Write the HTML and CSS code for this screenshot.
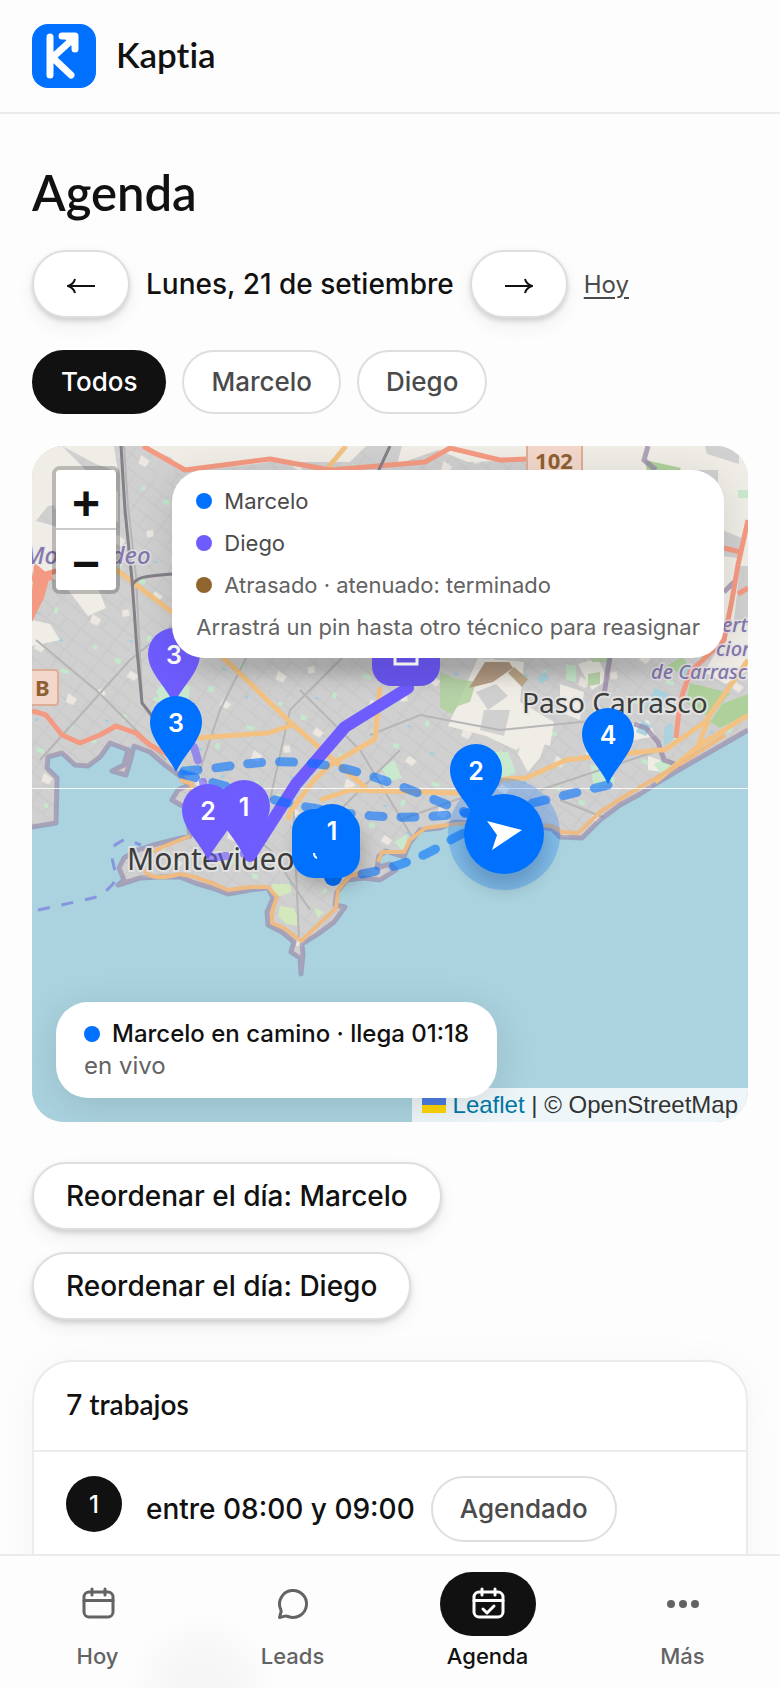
FILE: index.html
```html
<!DOCTYPE html>
<html lang="es">
<head>
<meta charset="utf-8">
<meta name="viewport" content="width=device-width, initial-scale=1">
<title>Agenda · Kaptia</title>
<link rel="stylesheet" href="styles.css">
</head>
<body>
<header class="topbar">
  <svg class="logo" viewBox="0 0 64 64" aria-hidden="true">
    <rect width="64" height="64" rx="16" fill="#0070ff"/>
    <g fill="none" stroke="#fff" stroke-width="7" stroke-linecap="round" stroke-linejoin="round">
      <path d="M18 13v38M20 34l22-20M20 33l19 18"/>
      <path d="M30 12h13v13" fill="#fff"/>
    </g>
  </svg>
  <span class="brand">Kaptia</span>
</header>

<main class="content">
  <h1 class="title">Agenda</h1>

  <div class="datebar">
    <button class="btn btn-arrow" type="button" aria-label="Día anterior">
      <svg class="arrow" viewBox="0 0 28 16" aria-hidden="true"><path d="M28 8H2M8 1C7 5 4 7 1 8c3 1 6 3 7 7"/></svg>
    </button>
    <span class="date">Lunes, 21 de setiembre</span>
    <button class="btn btn-arrow" type="button" aria-label="Día siguiente">
      <svg class="arrow" viewBox="0 0 28 16" aria-hidden="true"><path d="M0 8h26M20 1c1 4 4 6 7 7-3 1-6 3-7 7"/></svg>
    </button>
    <a class="today" href="#hoy">Hoy</a>
  </div>

  <div class="chips">
    <button class="chip chip-on" type="button">Todos</button>
    <button class="chip" type="button">Marcelo</button>
    <button class="chip" type="button">Diego</button>
  </div>

  <section class="map" aria-label="Mapa de trabajos">
    <svg class="map-canvas" viewBox="32 446 716 676" preserveAspectRatio="xMidYMid slice">
      <defs>
        <pattern id="streets" width="34" height="26" patternUnits="userSpaceOnUse" patternTransform="rotate(38)">
          <path d="M0 4H34M0 17H34M9 0V26M25 4V17" stroke="#c7c7c7" stroke-width="1" fill="none"/>
        </pattern>
        <pattern id="parks" width="97" height="83" patternUnits="userSpaceOnUse" patternTransform="rotate(17)">
          <path d="M12 14h6v5h-6zM60 40h8v4h-8zM36 66h4v6h-4zM84 8h4v4h-4z" fill="#c3e8cb"/>
          <path d="M30 22l9 3-3 6-8-2zM74 62l10 3-2 7-8-1zM4 50l6-3 3 6-6 3z" fill="#ece8e1"/>
          <path d="M50 12h3v3h-3zM20 76h4v2h-4z" fill="#9fcfe0"/>
        </pattern>
        <filter id="soft" x="-20%" y="-20%" width="140%" height="160%"><feGaussianBlur stdDeviation="9"/></filter>
        <path id="pin" d="M0 0C-9-19-26-32-26-50a26 26 0 0 1 52 0C26-32 9-19 0 0z"/>
      </defs>

      <rect x="32" y="446" width="716" height="676" fill="#d0d0d0"/>
      <rect x="32" y="446" width="716" height="500" fill="url(#streets)"/>
      <rect x="32" y="446" width="716" height="500" fill="url(#parks)"/>

      <!-- open land -->
      <g fill="#f0ede6">
        <path d="M146 446h220l-16 16-80 0-84 10z"/>
        <path d="M390 446h138v14l-60 2-30-12-40 14zM582 446h166v210l-30-10V470H582z"/>
        <path d="M32 446h30l30 30 26 16v30l-40-20-30 4-16 20zM62 446h52l4 26-22-8z"/>
        <path d="M32 520l30 8 20 20 24 60-18 8-26-34-30-10zM32 620l18 4 10 16-28 6z"/>
        <path d="M478 658l46 4-4 40 34 20-4 24-20-6-14 10-30-14-38-10z"/>
        <path d="M728 620h20v50l-22 14-22-12 18-30zM578 664l20-6 10 22-16 10zM560 684l24 8-4 28-20-8z"/>
        <path d="M524 734l24 0-8 24-12 14-10-18zM648 756l12 4 2 12-14-2zM608 730l40-10 8 16-32 6z"/>
      </g>
      <g fill="#d0d0d0">
        <path d="M705 446h34v18l-32-10zM722 530l20 8-4 20-16-2zM740 566h8v60l-14-6zM372 446h30l-6 22h-24zM152 450l20 8 4 18-18 4z"/>
        <path d="M484 710l26 0-6 26-24-6zM476 692l20-8 12 12-20 14z"/>
      </g>
      <g fill="#aed19b">
        <path d="M645 460l36 8-4 8-30-4zM690 683l40 10-20 24-24-14zM722 704l26-10v20l-28 14-10-6zM668 665l14-8 12 14-8 8z"/>
        <path d="M440 672l14 6 22 4-6 20-12 4-6 8-12-6zM588 674l12-2v12l-12 2zM588 652h24v10h-20z" opacity=".8"/>
      </g>
      <g fill="#c8e9ce">
        <path d="M500 750l10 6-2 24-12-6zM490 752l18 0 8 20-14 8-12-12zM156 690l14-12 20 8-2 20-26 2zM566 664l10 2v16l-10-2zM382 768l12-8 8 18-14 4zM654 764l12-6 8 10-12 8zM590 764l14 4 4 16-14 4z"/>
        <path d="M738 490h10v8h-10zM394 842l14-8-4 18z"/>
      </g>
      <path d="M485 662h24l4 6-20 14-24 6z" fill="#b79e86"/>
      <path d="M514 667l14 12-6 8-14-14z" fill="#bfa98a"/>
      <g fill="#aad3df">
        <path d="M655 688l14 6-10 18-14-4zM664 728l8-6 2 16-10 8zM642 720l10 6-6 10-10-4zM537 678l8-6 4 6-8 6zM680 672l10-6 2 8-10 4z"/>
      </g>
      <path d="M272 884l18 0 2 8-18 6zM280 906l14 2 6 18-14-2-8-8zM314 908l10 4-6 6z" fill="#d3e8bd"/>
      <path d="M124 446l4 60 8 70 6 120M36 640l60 50 70 70M40 760l90-100 62-50M200 770l20-60 30-60M270 800l20-90 60-60M300 690l60 60 60 100M370 735l50-20 80 15 100-10M330 870l10-60 60-60M210 800l60 50 40 60M293 800l6 140M540 790l120-40M560 800l50 20 40-30M400 820l100-36" fill="none" stroke="#b6b6b6" stroke-width="2"/>

      <!-- water -->
      <path d="M32 827L56 823L57 778L47 768L48 757L62 753L75 765L88 766L100 757L110 743L128 750L124 765L112 771L126 775L130 762L134 746L150 752L165 765L180 776L188 785L178 790L172 800L186 808L190 836L165 842L150 846L138 850L124 858L119 868L124 880L118 885L140 878L160 877L180 877L195 883L212 888L228 894L250 890L268 888L273 898L267 912L268 925L282 932L294 942L291 952L300 958L301 974L303 955L302 944L318 934L334 922L345 907L335 905L337 892L347 880L364 878L380 880L396 870L390 864L377 868L379 856L386 851L404 857L409 844L420 830L440 828L455 822L480 824L500 823L530 825L552 829L560 837L582 838L600 820L620 805L640 794L662 780L682 768L710 752L748 730V1122H32z" fill="#aad3df"/>
      <path d="M32 827L56 823L57 778L47 768L48 757L62 753L75 765L88 766L100 757L110 743L128 750L124 765L112 771L126 775L130 762L134 746L150 752L165 765L180 776L188 785L178 790L172 800L186 808L190 836L165 842L150 846L138 850L124 858L119 868L124 880L118 885L140 878L160 877L180 877L195 883L212 888L228 894L250 890L268 888L273 898L267 912L268 925L282 932L294 942L291 952L300 958L301 974L303 955L302 944L318 934L334 922L345 907L335 905L337 892L347 880L364 878L380 880L396 870L390 864L377 868L379 856L386 851L404 857L409 844L420 830L440 828L455 822L480 824L500 823L530 825L552 829L560 837L582 838L600 820L620 805L640 794L662 780L682 768L710 752L748 730" fill="none" stroke="#9583a6" stroke-opacity=".6" stroke-width="5" stroke-linejoin="round"/>
      <path d="M648 446l-4 14 12 10M611 652l-4 22-3 22M634 724l12 4 12 14 6 18 16 6M724 592l10-10" fill="none" stroke="#9583a6" stroke-opacity=".7" stroke-width="5"/>
      <path d="M38 910l37-8 26-6 12-12 3-8-4-18 3-13 10-6 16 6" fill="none" stroke="#7a80dd" stroke-opacity=".75" stroke-width="3" stroke-dasharray="12 12"/>

      <!-- roads -->
      <g fill="none" stroke-linejoin="round">
        <path d="M114 568L172 612L230 664L290 722L345 770L366 788M196 738L268 733L295 724M346 446L326 470M380 687L375 739L330 765L314 780L290 812L288 820M320 800L350 790L460 793L505 779L526 778L566 760L600 756L660 750L665 750L705 722L748 660M698 746L708 720M655 782L700 745L748 715" stroke="#f3c282" stroke-width="5"/>
        <path d="M144 870C150 880 165 878 180 874L195 877L212 883L228 890L250 887L268 887L277 897L272 912L272 923L284 928L301 941L336 908L338 890L350 876L362 872M378 862L382 852L404 852L410 840L425 828L455 824L500 822L552 826L562 832L578 833L600 812L625 796L680 764L725 735M190 836L165 846L152 852M180 780L192 784L190 800" stroke="#eebb83" stroke-width="4"/>
        <path d="M143 446l42 24 85-11 60 11 95-8 25-14 50 12 28-1M32 612l14-38 14-4M32 578l20 0M32 711l14 4 16 20 18 8 20-8 16-9 20 7 14 12 22 12M748 520l-10 45-6 35-8 40-34 32-10 30-4 36M724 548l16 4M738 594l10-6" stroke="#f59a82" stroke-width="5"/>
        <path d="M34 562l16 14-6 22-12 24v-30z" fill="#f59a82"/>
        <path d="M121 446l4 64 7 70 5 70 5 53 14 18M132 586c4-10 16-10 40-12M390 446l-14 30" stroke="#858088" stroke-width="3"/>
      </g>

      <!-- place labels -->
      <g class="place">
        <text x="127" y="870" font-size="30">Montevideo</text>
        <text x="522" y="713" font-size="28">Paso Carrasco</text>
      </g>
      <g class="area">
        <text x="24" y="564" font-size="24">Montevideo</text>
        <g font-size="20"><text x="722" y="632">erto</text><text x="716" y="656">cional</text><text x="651" y="679">de Carrasco</text></g>
      </g>
      <g class="shield">
        <rect x="527" y="436" width="55" height="38" rx="3"/><text x="554" y="469">102</text>
        <rect x="20" y="670" width="38" height="35" rx="3"/><text x="36" y="696">1B</text>
      </g>
      <path d="M32 788.500H748" stroke="#fff" stroke-opacity=".85" stroke-width="1"/>

      <!-- routes -->
      <g fill="none" stroke-linecap="round" stroke-linejoin="round">
        <path d="M408 688L345 727L296 784L250 856" stroke="#6e5cff" stroke-width="12"/>
        <path d="M194 747l6 20M203 782l4 20M212 858l36-5" stroke="#6e5cff" stroke-opacity=".6" stroke-width="8" stroke-dasharray="14 18"/>
        <g stroke="#0070ff" stroke-opacity=".58" stroke-width="9" stroke-dasharray="14 18">
          <path d="M184 771c44-3 72-11 108-9 50 2 80 14 116 27l64 26"/>
          <path d="M182 774c40 10 80 25 130 34 60 10 100 13 170 3"/>
          <path d="M362 874c40-8 60-16 92-36l30-15M608 785l-100 24"/>
        </g>
      </g>

      <!-- markers -->
      <g filter="url(#soft)" opacity=".2"><rect x="296" y="826" width="68" height="60" rx="20"/><circle cx="504" cy="846" r="42"/><ellipse cx="430" cy="664" rx="240" ry="10"/></g>
      <g class="pin-text">
        <g fill="#6e5cff">
          <rect x="372" y="618" width="68" height="68" rx="20" fill="#6654ea"/>
          <use href="#pin" x="174" y="704"/><use href="#pin" x="208" y="860"/><use href="#pin" x="244" y="856"/>
        </g>
        <path d="M395 640h22v24h-22z" fill="none" stroke="#fff" stroke-width="3"/>
        <g fill="#0070ff">
          <circle cx="333" cy="877" r="9" fill="#0061dc"/>
          <use href="#pin" x="176" y="772"/><use href="#pin" x="608" y="784"/>
          <use href="#pin" x="476" y="820"/>
          <rect x="292" y="809" width="68" height="69" rx="22"/>
          <circle cx="332" cy="830" r="26"/>
          <circle cx="504" cy="834" r="56" fill-opacity=".25"/><circle cx="504" cy="834" r="40"/>
        </g>
        <path d="M487 821l35 9-30 20 5-15z" fill="#fff"/>
        <path d="M314 853q0 4 3 5" stroke="#fff" stroke-width="2" fill="none"/>
        <text x="174" y="664">3</text><text x="176" y="732">3</text><text x="208" y="820">2</text><text x="244" y="816">1</text>
        <text x="332" y="840">1</text><text x="476" y="780">2</text><text x="608" y="744">4</text>
      </g>
    </svg>

    <div class="zoom">
      <button type="button" aria-label="Acercar">+</button>
      <button type="button" aria-label="Alejar">−</button>
    </div>

    <div class="credit">
      <svg class="flag" viewBox="0 0 24 16" aria-hidden="true"><path d="M0 0h24v8H0z" fill="#4c7be1"/><path d="M0 8h24v8H0z" fill="#ffd500"/></svg>
      <span><a href="#leaflet">Leaflet</a> | © OpenStreetMap</span>
    </div>

    <ul class="legend">
      <li><i class="dot dot-blue"></i>Marcelo</li>
      <li><i class="dot dot-violet"></i>Diego</li>
      <li class="muted"><i class="dot dot-brown"></i>Atrasado · atenuado: terminado</li>
      <li class="muted">Arrastrá un pin hasta otro técnico para reasignar</li>
    </ul>

    <div class="live">
      <div class="live-main"><i class="dot dot-blue"></i>Marcelo en camino · llega 01:18</div>
      <div class="live-sub">en vivo</div>
    </div>
  </section>

  <div class="actions">
    <button class="btn" type="button">Reordenar el día: Marcelo</button>
    <button class="btn" type="button">Reordenar el día: Diego</button>
  </div>

  <section class="card">
    <h2 class="card-title">7 trabajos</h2>
    <div class="job">
      <span class="job-num">1</span>
      <span class="job-time">entre 08:00 y 09:00</span>
      <span class="badge">Agendado</span>
    </div>
  </section>
</main>

<nav class="tabs">
  <a class="tab" href="#hoy">
    <span class="tab-icon"><svg viewBox="0 0 40 40" aria-hidden="true"><rect x="6" y="8" width="29" height="25" rx="5"/><path d="M6 16.500h29M14 5v6M27 5v6"/></svg></span>Hoy
  </a>
  <a class="tab" href="#leads">
    <span class="tab-icon"><svg viewBox="0 0 40 40" aria-hidden="true"><path d="M6.500 33.500l1.500-5.500c.4-1.300 0-2-.5-3A13.500 13.500 0 1 1 15 32.500c-1-.4-2-.7-3-.4z"/></svg></span>Leads
  </a>
  <a class="tab tab-on" href="#agenda" aria-current="page">
    <span class="tab-icon"><svg viewBox="0 0 40 40" aria-hidden="true"><rect x="6" y="8" width="29" height="25" rx="5"/><path d="M6 16.500h29M14 5v6M27 5v6M15 25l4 4 7-7"/></svg></span>Agenda
  </a>
  <a class="tab" href="#mas">
    <span class="tab-icon"><svg class="dots" viewBox="0 0 40 40" aria-hidden="true"><circle cx="8" cy="20" r="4"/><circle cx="20" cy="20" r="4"/><circle cx="32" cy="20" r="4"/></svg></span>Más
  </a>
</nav>
</body>
</html>
```
FILE: styles.css
```css
* { box-sizing: border-box; }

body {
  margin: 0;
  height: 100vh;
  display: flex;
  flex-direction: column;
  background: #fdfdfd;
  color: #111;
  font-family: Inter, "Liberation Sans", sans-serif;
  font-size: 28px;
  font-weight: 500;
}

button { font: inherit; color: inherit; cursor: pointer; }

.topbar {
  flex: none;
  display: flex;
  align-items: center;
  gap: 20px;
  padding: 24px 32px;
  border-bottom: 2px solid #ebebeb;
}
.logo { width: 64px; height: 64px; }
.brand, .title, .card-title {
  font-family: Lato, Inter, sans-serif;
  font-weight: 600;
  font-variant-ligatures: none;
}
.brand { padding-bottom: 4px; font-size: 35px; line-height: 40px; }

.content {
  flex: 1;
  min-height: 0;
  overflow-y: auto;
  scrollbar-width: none;
  padding: 50px 32px 0;
}

.title { margin: 0 0 30px; font-size: 49px; line-height: 56px; }

.datebar { display: flex; align-items: center; gap: 16px; }
.btn {
  height: 68px;
  padding: 0 32px;
  border: 2px solid #dedede;
  border-radius: 34px;
  background: #fff;
  box-shadow: 0 3px 5px rgba(0, 0, 0, .14), 0 8px 20px rgba(0, 0, 0, .06);
}
.btn-arrow { width: 98px; display: flex; align-items: center; justify-content: center; }
.arrow { width: 28px; height: 16px; margin-top: 4px; fill: none; stroke: #111; stroke-width: 2; }
.today { color: #4a4a4a; font-size: 24px; font-weight: 400; text-underline-offset: 4px; }

.chips { display: flex; gap: 16px; margin-top: 32px; }
.chip, .badge {
  border: 2px solid #dedede;
  border-radius: 34px;
  background: #fff;
  color: #4a4a4a;
  font-size: 26px;
}
.chip { height: 64px; padding: 0 27px 2px; }
.chip-on { background: #111; border-color: #111; color: #fff; }

.map {
  position: relative;
  margin-top: 32px;
  aspect-ratio: 716 / 676;
  border-radius: 32px;
  overflow: hidden;
}
.map-canvas { display: block; width: 100%; height: 100%; }
.place { font-family: "Noto Sans", sans-serif; font-weight: 400; fill: #3c3c3c; stroke: #e6e6e6; stroke-opacity: .8; stroke-width: 4px; paint-order: stroke; }
.area { font-family: "Noto Sans", sans-serif; font-style: italic; font-weight: 500; fill: #8478ab; stroke: #e8e6ea; stroke-opacity: .8; stroke-width: 3px; paint-order: stroke; }
.shield { font: 700 22px "Noto Sans", sans-serif; text-anchor: middle; }
.shield rect { fill: #f3d7cb; stroke: #dcae96; stroke-width: 2px; }
.shield text { fill: #8f6132; }
.pin-text text { font-size: 25px; font-weight: 600; text-anchor: middle; fill: #fff; }

.zoom {
  position: absolute;
  left: 20px;
  top: 20px;
  width: 68px;
  border: 4px solid rgba(0, 0, 0, .22);
  border-radius: 8px;
  background-clip: padding-box;
}
.zoom button {
  display: block;
  width: 100%;
  height: 60px;
  padding: 8px 0 0;
  border: 0;
  background: #fff;
  font: 700 48px/52px "Liberation Sans", sans-serif;
}
.zoom button:first-child { border-bottom: 2px solid #ccc; border-radius: 4px 4px 0 0; }
.zoom button:last-child { border-radius: 0 0 4px 4px; }

.credit {
  position: absolute;
  right: 0;
  bottom: 0;
  display: flex;
  align-items: center;
  gap: 7px;
  padding: 0 10px;
  background: rgba(255, 255, 255, .8);
  color: #333;
  font: 400 24px/34px "Liberation Sans", sans-serif;
}
.credit a { color: #0078a8; text-decoration: none; }
.flag { width: 24px; height: 16px; }

.legend {
  position: absolute;
  right: 24px;
  top: 24px;
  display: grid;
  gap: 12px;
  margin: 0;
  padding: 16px 24px;
  border-radius: 32px;
  background: #fff;
  box-shadow: 0 8px 40px rgba(0, 0, 0, .12);
  list-style: none;
  color: #4a4a4a;
  font-size: 22px;
  font-weight: 400;
  line-height: 30px;
}
.legend li, .live-main { display: flex; align-items: center; gap: 12px; }
.legend .muted { color: #636363; }
.dot { flex: none; width: 16px; height: 16px; border-radius: 50%; }
.dot-blue { background: #0070ff; }
.dot-violet { background: #6e5cff; }
.dot-brown { background: #91652f; }

.live {
  position: absolute;
  left: 24px;
  bottom: 24px;
  padding: 16px 28px;
  border-radius: 32px;
  background: #fff;
  box-shadow: 0 8px 40px rgba(0, 0, 0, .12);
  font-size: 24px;
  line-height: 32px;
}
.live-sub { color: #636363; font-weight: 400; }

.actions {
  display: flex;
  flex-direction: column;
  align-items: flex-start;
  gap: 22px;
  margin: 40px 0;
}

.card {
  border: 2px solid #ebebeb;
  border-radius: 40px;
  background: #fff;
  box-shadow: 0 4px 40px rgba(0, 0, 0, .04);
}
.card-title {
  margin: 0;
  padding: 22px 32px 26px;
  border-bottom: 2px solid #ebebeb;
  font-size: 28px;
  line-height: 40px;
}
.job { display: flex; align-items: center; padding: 24px 32px 120px; }
.job-num {
  align-self: flex-start;
  display: grid;
  place-items: center;
  width: 56px;
  height: 56px;
  margin-right: 24px;
  border-radius: 50%;
  background: #111;
  color: #fff;
  font-size: 24px;
}
.job-time { margin-right: 16px; }
.badge { padding: 0 27px; line-height: 62px; }

.tabs {
  flex: none;
  display: grid;
  grid-template-columns: repeat(4, 1fr);
  padding: 16px 0;
  border-top: 2px solid #ebebeb;
  background: radial-gradient(circle 76px at 26% 100%, #f6f6f6 40%, #fdfdfd 100%);
}
.tab {
  display: flex;
  flex-direction: column;
  align-items: center;
  gap: 4px;
  color: #636363;
  text-decoration: none;
  font-size: 22px;
  line-height: 32px;
}
.tab-on { color: #111; }
.tab-icon {
  display: grid;
  place-items: center;
  width: 96px;
  height: 64px;
  border-radius: 32px;
}
.tab-on .tab-icon { background: #111; color: #fff; }
.tab-icon svg {
  width: 40px;
  height: 40px;
  fill: none;
  stroke: currentColor;
  stroke-width: 3;
  stroke-linecap: round;
  stroke-linejoin: round;
}
.tab-icon .dots { fill: currentColor; stroke: none; }
```
